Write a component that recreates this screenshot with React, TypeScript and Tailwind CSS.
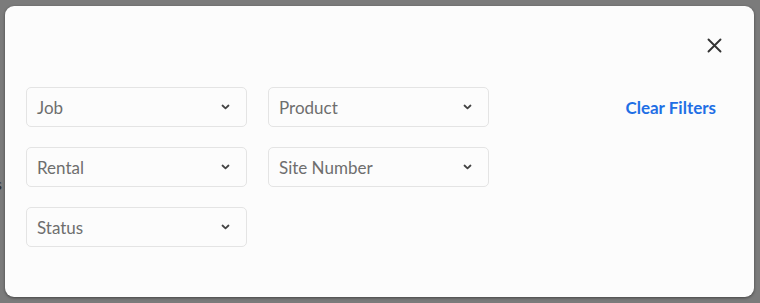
import React from 'react';

const filters = [
  ['Job', 'Product'],
  ['Rental', 'Site Number'],
  ['Status'],
];

const Chevron = () => (
  <svg width="9" height="6" viewBox="0 0 9 6" fill="none" className="text-[#444]">
    <path d="M1.5 1.5 L4.5 4.3 L7.5 1.5" stroke="currentColor" strokeWidth="1.8" strokeLinecap="round" strokeLinejoin="round" />
  </svg>
);

const Select = ({ label }: { label: string }) => (
  <button className="flex h-[40px] w-[221px] items-center justify-between rounded-[5px] border border-[#e4e4e4] bg-[#fcfcfc] pl-[10px] pr-[16px] text-left text-[17px] text-[#6e6e6e]">
    <span className="pt-[2px]">{label}</span>
    <Chevron />
  </button>
);

const App: React.FC = () => {
  return (
    <div className="relative h-[303px] w-[760px] overflow-hidden bg-[#7b7b7b] pl-[5px] pt-[6px]" style={{ fontFamily: 'Lato, "Noto Sans", sans-serif' }}>
      {/* page text peeking out behind the overlay */}
      <span className="absolute left-[-5px] top-[172px] text-[16px] text-[#2a2a2a]">s</span>

      <div className="relative flex h-[291px] w-[749px] flex-col rounded-[9px] bg-[#fcfcfc] shadow-[0_1px_3px_rgba(0,0,0,0.45)]">
        <div className="flex justify-end pr-[32px] pt-[32px]">
          <button className="text-[#333]">
            <svg width="15" height="15" viewBox="0 0 15 15" fill="none">
              <path d="M1.5 1.5 L13.5 13.5 M13.5 1.5 L1.5 13.5" stroke="currentColor" strokeWidth="1.9" strokeLinecap="round" />
            </svg>
          </button>
        </div>

        <div className="mt-[34px] flex justify-between pl-[21px] pr-[38px]">
          <div className="flex flex-col gap-[20px]">
            {filters.map((row, i) => (
              <div key={i} className="flex gap-[21px]">
                {row.map((f) => (
                  <Select key={f} label={f} />
                ))}
              </div>
            ))}
          </div>
          <div className="flex h-[40px] items-center pt-[2px]">
            <button className="text-[17px] font-bold text-[#1f6fe5]">Clear Filters</button>
          </div>
        </div>
      </div>
    </div>
  );
};

export default App;
